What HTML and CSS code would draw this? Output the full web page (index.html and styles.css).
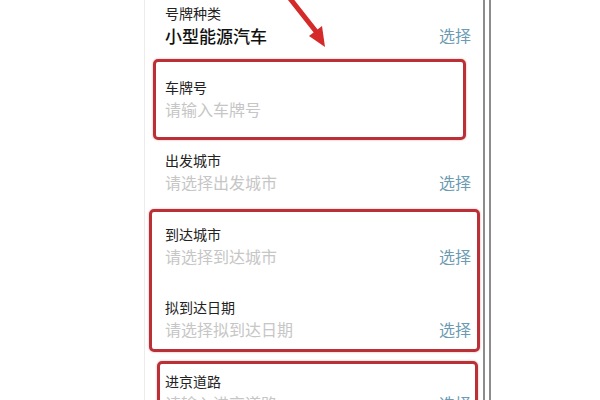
FILE: index.html
```html
<!DOCTYPE html>
<html lang="zh-CN">
<head>
    <meta charset="UTF-8">
    <meta name="viewport" content="width=device-width, initial-scale=1.0">
    <title>进京证申请</title>
    <link rel="stylesheet" href="styles.css">
</head>
<body>

<div class="screen">
    <div class="phone">
        <div class="form">
            <div class="row">
                <div class="label">号牌种类</div>
                <div class="line">
                    <span class="value filled">小型能源汽车</span>
                    <span class="pick">选择</span>
                </div>
            </div>
            <div class="row">
                <div class="label">车牌号</div>
                <div class="line">
                    <span class="value">请输入车牌号</span>
                </div>
            </div>
            <div class="row">
                <div class="label">出发城市</div>
                <div class="line">
                    <span class="value">请选择出发城市</span>
                    <span class="pick">选择</span>
                </div>
            </div>
            <div class="row">
                <div class="label">到达城市</div>
                <div class="line">
                    <span class="value">请选择到达城市</span>
                    <span class="pick">选择</span>
                </div>
            </div>
            <div class="row">
                <div class="label">拟到达日期</div>
                <div class="line">
                    <span class="value">请选择拟到达日期</span>
                    <span class="pick">选择</span>
                </div>
            </div>
            <div class="row">
                <div class="label">进京道路</div>
                <div class="line">
                    <span class="value">请输入进京道路</span>
                    <span class="pick">选择</span>
                </div>
            </div>
        </div>
    </div>
    <div class="rail"></div>
</div>

<!-- red annotations drawn over the screenshot -->
<div class="mark mark-plate"></div>
<div class="mark mark-arrive"></div>
<div class="mark mark-road"></div>

<svg class="arrow" width="60" height="60" viewBox="0 0 60 60">
    <line x1="4" y1="-4" x2="34" y2="34" stroke="#d42a2a" stroke-width="5" stroke-linecap="round"/>
    <polygon points="41,47 25,36 38,26" fill="#d42a2a"/>
</svg>

</body>
</html>
```

FILE: styles.css
```css
body {
    margin: 0;
    height: 400px;
    overflow: hidden;
    background: #fff;
    font-family: "Noto Sans CJK SC", "Noto Sans", sans-serif;
    color: #222;
    position: relative;
}

.screen {
    display: flex;
    height: 400px;
}

.phone {
    margin-left: 144px;
    width: 338px;
    border-left: 1px solid #ececec;
    border-right: 2px solid #8c8c8c;
}

.rail {
    width: 2px;
    margin-left: 4px;
    background: #8c8c8c;
}

.form {
    margin-top: -11px;
    padding: 0 12px 0 20px;
}

.row {
    padding: 14px 0 15.5px;
}

.label {
    font-size: 14px;
    line-height: 20px;
    color: #222;
}

.line {
    display: flex;
    justify-content: space-between;
    align-items: center;
    height: 24px;
}

.value {
    font-size: 16px;
    color: #c6c6c6;
}

.value.filled {
    font-size: 17px;
    font-weight: 500;
    color: #111;
}

.pick {
    font-size: 16px;
    color: #6c9bb2;
}

.mark {
    position: absolute;
    border: 3px solid #bb2f37;
    border-radius: 5px;
    box-shadow: 0 0 2px rgba(200, 60, 60, 0.5);
}

.mark-plate {
    left: 153px;
    top: 59px;
    width: 307px;
    height: 75px;
}

.mark-arrive {
    left: 149px;
    top: 209px;
    width: 325px;
    height: 137px;
}

.mark-road {
    left: 157px;
    top: 361px;
    width: 315px;
    height: 60px;
}

.arrow {
    position: absolute;
    left: 284px;
    top: 0;
}
```
